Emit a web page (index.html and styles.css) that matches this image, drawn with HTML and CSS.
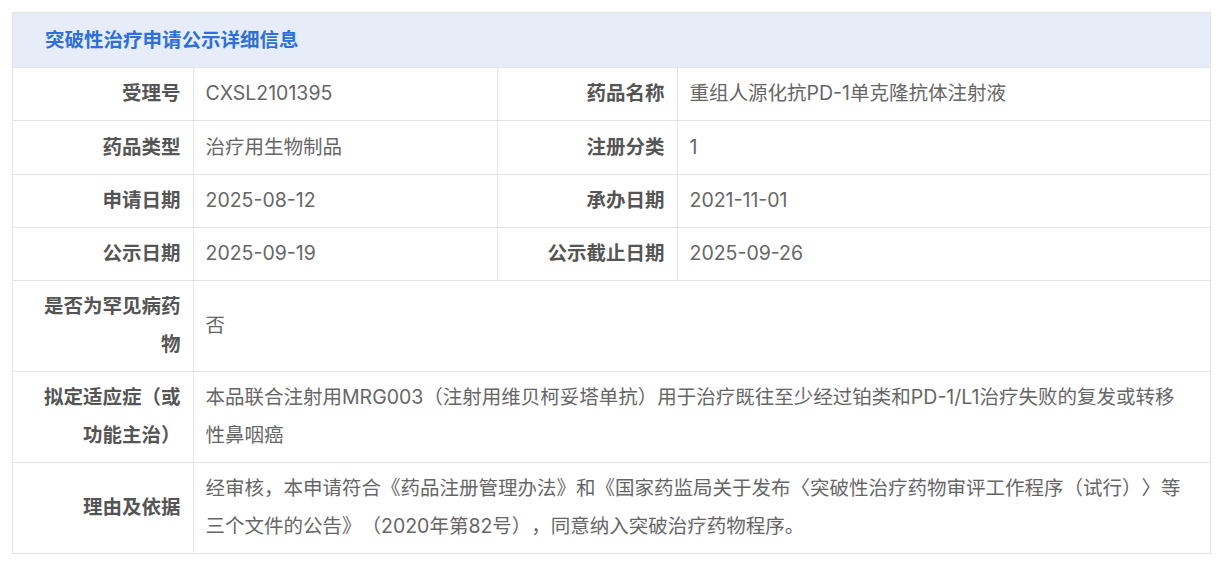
FILE: index.html
```html
<!DOCTYPE html>
<html lang="zh-CN">
<head>
<meta charset="utf-8">
<title>突破性治疗申请公示详细信息</title>
<link rel="stylesheet" href="styles.css">
</head>
<body>
<div class="panel">
  <div class="panel-head">突破性治疗申请公示详细信息</div>
  <table class="info">
    <colgroup>
      <col class="c-label"><col class="c-val1"><col class="c-label"><col class="c-val2">
    </colgroup>
    <tr>
      <th>受理号</th><td>CXSL2101395</td>
      <th>药品名称</th><td>重组人源化抗PD-1单克隆抗体注射液</td>
    </tr>
    <tr>
      <th>药品类型</th><td>治疗用生物制品</td>
      <th>注册分类</th><td>1</td>
    </tr>
    <tr>
      <th>申请日期</th><td>2025-08-12</td>
      <th>承办日期</th><td>2021-11-01</td>
    </tr>
    <tr>
      <th>公示日期</th><td>2025-09-19</td>
      <th>公示截止日期</th><td>2025-09-26</td>
    </tr>
    <tr>
      <th>是否为罕见病药物</th><td colspan="3">否</td>
    </tr>
    <tr>
      <th>拟定适应症（或功能主治）</th><td colspan="3" class="wide">本品联合注射用MRG003（注射用维贝柯妥塔单抗）用于治疗既往至少经过铂类和PD-1/L1治疗失败的复发或转移性鼻咽癌</td>
    </tr>
    <tr>
      <th>理由及依据</th><td colspan="3" class="wide">经审核，本申请符合《药品注册管理办法》和《国家药监局关于发布〈突破性治疗药物审评工作程序（试行）〉等三个文件的公告》（2020年第82号），同意纳入突破治疗药物程序。</td>
    </tr>
  </table>
</div>
</body>
</html>
```

FILE: styles.css
```css
html, body {
  margin: 0;
  padding: 0;
  background: #ffffff;
}
body {
  padding: 12px 15px 0 12px;
  font-family: "Inter", "Noto Sans CJK SC", sans-serif;
  text-spacing-trim: space-all;
}
.panel {
  width: 1199px;
  border: 1px solid #e3e3e3;
  box-sizing: border-box;
}
.panel-head {
  height: 54px;
  line-height: 54px;
  padding-left: 32px;
  background: #e6edf8;
  color: #2e6fd9;
  font-size: 19.5px;
  font-weight: 700;
  border-bottom: 1px solid #e3e3e3;
}
.info {
  width: 100%;
  border-collapse: collapse;
  table-layout: fixed;
  font-size: 19.5px;
}
.c-label { width: 180px; }
.c-val1 { width: 304px; }
.c-val2 { width: auto; }
.info th, .info td {
  border: 1px solid #e3e3e3;
  padding: 7.25px 12px;
  line-height: 37.75px;
  vertical-align: middle;
}
.info td.wide { padding-right: 18px; }
.info tr:first-child th, .info tr:first-child td { border-top: none; }
.info tr:last-child th, .info tr:last-child td { border-bottom: none; }
.info tr th:first-child { border-left: none; }
.info tr td:last-child { border-right: none; }
.info th {
  text-align: right;
  color: #555555;
  font-weight: 700;
}
.info td {
  text-align: left;
  color: #666666;
  font-weight: 400;
}
```
